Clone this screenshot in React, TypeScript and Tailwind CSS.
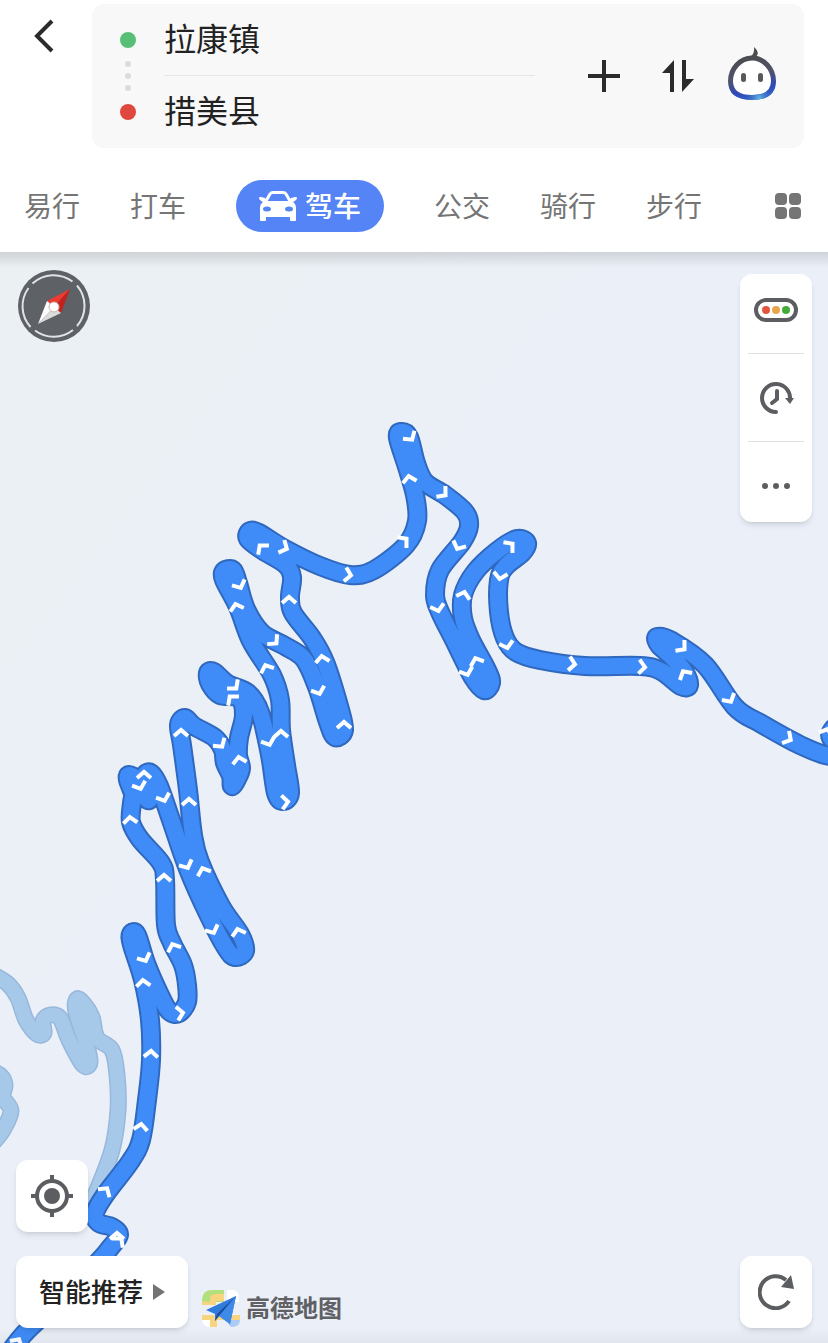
import { ReactNode } from 'react';

type Point = [number, number];

// Main driving route, listed from the south-west end to the east edge
const ROUTE: Point[] = [
  [-2, 1368], [24, 1334], [60, 1300], [98, 1262], [110, 1248], [119, 1235], [112, 1227], [99, 1223], [95, 1213], [105, 1195],
  [130, 1162], [141, 1140], [147, 1100], [151, 1060], [150, 1020], [143, 980], [132, 945], [131, 934], [137, 935],
  [146, 963], [159, 993], [169, 1011], [179, 1013], [187, 1002], [187, 985], [183, 965], [172, 943], [166, 925],
  [165, 880], [161, 863], [140, 839], [131, 822], [132, 803], [133, 794], [128, 780], [129, 775], [137, 780],
  [143, 794], [149, 800], [146, 785], [145, 775], [151, 773], [159, 786], [171, 820], [188, 869], [209, 916], [226, 948],
  [235, 957], [245, 951], [240, 934], [221, 906], [200, 862], [193, 835], [188, 790], [182, 745], [179, 725],
  [185, 718], [194, 726], [215, 738], [223, 750], [225, 763], [231, 776], [232, 786], [237, 779], [241, 768],
  [238, 755], [239, 738], [244, 715], [239, 698], [220, 695], [210, 684], [208, 673], [214, 672], [228, 684],
  [248, 693], [260, 712], [270, 755], [276, 793], [283, 801], [290, 793], [286, 765], [281, 730], [280, 700],
  [272, 675], [251, 641], [238, 607], [224, 580], [224, 571], [233, 570], [238, 583], [246, 609], [262, 633],
  [285, 646], [304, 659], [317, 687], [328, 722], [335, 737], [344, 730], [339, 706], [325, 662], [312, 638],
  [293, 613], [290, 597], [292, 577], [285, 564], [262, 550], [248, 539], [250, 531], [259, 533], [285, 549],
  [320, 566], [350, 575], [374, 570], [406, 545], [417, 521], [415, 495], [407, 467], [398, 438], [401, 432],
  [409, 437], [416, 463], [425, 482], [445, 495], [465, 512], [469, 526], [462, 542], [440, 570], [435, 595],
  [440, 612], [455, 642], [472, 676], [484, 690], [491, 683], [487, 670], [471, 640], [463, 618], [463, 595],
  [475, 572], [497, 551], [517, 539], [527, 543], [522, 553], [506, 566], [499, 580], [499, 612], [505, 638],
  [516, 652], [540, 660], [585, 666], [640, 666], [661, 671], [681, 686], [689, 685], [684, 671], [671, 656],
  [659, 645], [657, 637], [672, 641], [705, 665], [735, 707], [760, 723], [800, 745], [830, 756], [845, 750],
  [831, 738], [833, 729], [844, 722],
];

const SIDE_ROAD: Point[] = [
  [-8, 974], [8, 984], [18, 998], [26, 1020], [37, 1034], [44, 1033], [43, 1021], [50, 1015], [60, 1018], [69, 1040],
  [83, 1065], [90, 1062], [86, 1043], [76, 1012], [77, 999], [84, 1004], [92, 1017], [97, 1038], [112, 1050], [117, 1075],
  [118, 1110], [112, 1150], [95, 1195], [85, 1215],
];

const EDGE_ROAD: Point[] = [[-10, 1070], [1, 1076], [5, 1085], [3, 1097], [11, 1111], [3, 1130], [-8, 1144]];

// x, y and heading in degrees (0 points north)
const ARROWS: [number, number, number][] = [
  [411, 438, 145], [409, 478, -10], [444, 494, 130], [405, 540, 50], [349, 575, 100], [285, 548, 115],
  [261, 547, -40], [240, 586, 155], [236, 606, -15], [289, 599, 0], [275, 642, 135], [322, 658, -8],
  [319, 692, 160], [344, 724, 0], [266, 667, -22], [235, 687, 140], [231, 698, -40], [281, 733, 0],
  [269, 743, 160], [286, 802, 85], [181, 732, 0], [221, 745, 145], [239, 759, -10], [144, 774, 0],
  [140, 787, 160], [164, 799, 160], [189, 801, 0], [130, 819, -5], [164, 877, 0], [187, 866, 155],
  [203, 870, -20], [213, 931, 155], [238, 931, -15], [145, 959, 155], [143, 982, -5], [173, 946, -22],
  [181, 1013, 80], [151, 1053, 3], [141, 1126, 8], [106, 1190, 35], [117, 1235, 0], [120, 1240, 40], [458, 547, 205],
  [464, 594, 15], [438, 609, 165], [511, 545, 50], [500, 577, 190], [476, 660, -20], [467, 673, 160],
  [507, 646, 165], [573, 664, 98], [643, 667, 95], [683, 648, 130], [684, 673, -30], [730, 700, 150],
  [789, 739, 120], [827, 731, 20], [18, 1341, 30],
];

// Catmull-Rom through every point, written as cubic curves
const toPath = (pts: Point[]) => {
  let d = `M${pts[0][0]} ${pts[0][1]}`;
  for (let i = 0; i < pts.length - 1; i++) {
    const p0 = pts[i - 1] ?? pts[i];
    const p1 = pts[i];
    const p2 = pts[i + 1];
    const p3 = pts[i + 2] ?? p2;
    d += `C${p1[0] + (p2[0] - p0[0]) / 6} ${p1[1] + (p2[1] - p0[1]) / 6} ${p2[0] - (p3[0] - p1[0]) / 6} ${p2[1] - (p3[1] - p1[1]) / 6} ${p2[0]} ${p2[1]}`;
  }
  return d;
};

const RouteMap = () => {
  const route = toPath(ROUTE);
  const side = toPath(SIDE_ROAD);
  const edge = toPath(EDGE_ROAD);
  return (
    <svg
      className="absolute inset-0 h-full w-full"
      viewBox="0 252 828 1091"
      preserveAspectRatio="xMidYMid slice"
      fill="none"
      strokeLinecap="round"
      strokeLinejoin="round"
      aria-hidden="true"
    >
      <g stroke="#98b7dc" strokeWidth="17">
        <path d={side} />
        <path d={edge} />
      </g>
      <g stroke="#a7c9e9" strokeWidth="14">
        <path d={side} />
        <path d={edge} />
      </g>
      <path d={route} stroke="#2f68be" strokeWidth="20" />
      <path d={route} stroke="#3f8cf8" strokeWidth="16" />
      <g stroke="#fff" strokeWidth="4" strokeLinecap="butt" strokeLinejoin="miter">
        {ARROWS.map(([x, y, deg]) => (
          <path key={`${x}-${y}`} d="M-7 4L0 -2L7 4" transform={`translate(${x} ${y}) rotate(${deg})`} />
        ))}
      </g>
    </svg>
  );
};

const BackIcon = () => (
  <svg className="h-9 w-6" viewBox="0 0 24 36" fill="none" stroke="#2b2b2b" strokeWidth="4">
    <path d="M21 3L6 18L21 33" />
  </svg>
);

const PlusIcon = () => (
  <svg className="size-8" viewBox="0 0 32 32" stroke="#2b2b2b" strokeWidth="4">
    <path d="M16 0V32M0 16H32" />
  </svg>
);

const SwapIcon = () => (
  <svg className="size-8" viewBox="0 0 32 32" fill="#2b2b2b">
    <path d="M12 0V32H8V13H0ZM20 0H24V19H32L20 32Z" />
  </svg>
);

const AssistantIcon = () => (
  <svg className="h-14 w-12" viewBox="0 0 48 56" fill="none">
    <defs>
      <linearGradient id="face" x1="20" y1="10" x2="30" y2="54" gradientUnits="userSpaceOnUse">
        <stop offset="0" stopColor="#4b4c50" />
        <stop offset=".45" stopColor="#50536a" />
        <stop offset=".75" stopColor="#2f49b8" />
        <stop offset="1" stopColor="#3565c8" />
      </linearGradient>
      <radialGradient id="glow" cx="31" cy="52" r="14" gradientUnits="userSpaceOnUse">
        <stop offset="0" stopColor="#62b4e2" />
        <stop offset="1" stopColor="#3565c8" stopOpacity="0" />
      </radialGradient>
    </defs>
    <path d="M24 12C36 12 45.500 23 45.500 35C45.500 47 37 51.500 24 51.500S2.500 47 2.500 35C2.500 23 12 12 24 12Z" fill="#fff" stroke="url(#face)" strokeWidth="5" />
    <path d="M45.500 35C45.500 47 37 51.500 24 51.500S2.500 47 2.500 35" stroke="url(#glow)" strokeWidth="5" />
    <path d="M26 1Q33 7 27 12L22 11Q27 8 26 1Z" fill="#4b4c50" />
    <path d="M15.500 29.500V33.500M32.500 29.500V33.500" stroke="#58595c" strokeWidth="5" strokeLinecap="round" />
  </svg>
);

const CarIcon = () => (
  <svg className="h-8 w-[38px]" viewBox="0 0 38 32" fill="none">
    <path d="M7 11L11 4Q12 2.500 14 2.500H24Q26 2.500 27 4L31 11" stroke="#fff" strokeWidth="3" />
    <path
      d="M0 8Q0 6.500 2 7L6 8L8 11H30L32 8L36 7Q38 6.500 38 8Q38 10 34 12Q37 14 37 18V30Q37 31 36 31H32Q31 31 31 30V27H7V30Q7 31 6 31H2Q1 31 1 30V18Q1 14 4 12Q0 10 0 8Z"
      fill="#fff"
    />
    <ellipse cx="8" cy="19" rx="4" ry="2.500" fill="#5484f5" />
    <ellipse cx="30" cy="19" rx="4" ry="2.500" fill="#5484f5" />
  </svg>
);

const CompassIcon = () => (
  <svg className="size-[72px]" viewBox="0 0 72 72" fill="none">
    <circle cx="36" cy="36" r="36" fill="#5e6165" />
    <g stroke="#dfe3e6" strokeWidth="2">
      <path d="M14.500 13.500A31 31 0 0 1 54.500 11.500" />
      <path d="M59 15.500A31 31 0 0 1 59 56" />
      <path d="M55 60A31 31 0 0 1 17 60.500" />
      <path d="M12.500 57A31 31 0 0 1 10.500 18" />
    </g>
    <path d="M52 19L29 31L36 37Z" fill="#ef3a32" />
    <path d="M52 19L43 43L36 37Z" fill="#c3221c" />
    <path d="M20 54L29 31L36 37Z" fill="#fff" />
    <path d="M20 54L43 43L36 37Z" fill="#dcdcda" />
    <circle cx="36" cy="37" r="5" fill="#fff" stroke="#c9b3af" />
  </svg>
);

const TrafficIcon = () => (
  <svg className="h-6 w-11" viewBox="0 0 44 24">
    <rect x="2" y="2" width="40" height="20" rx="10" fill="#fff" stroke="#5c5d61" strokeWidth="4" />
    <circle cx="12" cy="12" r="4" fill="#e2543d" />
    <circle cx="22" cy="12" r="4" fill="#e9a648" />
    <circle cx="32" cy="12" r="4" fill="#45ac38" />
  </svg>
);

const DepartIcon = () => (
  <svg className="h-8 w-9" viewBox="0 0 36 32" fill="none" stroke="#5c5d61" strokeWidth="4" strokeLinecap="round">
    <path d="M18 30A14 14 0 1 1 32 17" />
    <path d="M19 9V17L14 21" />
    <path d="M27 16H36L32 22Z" fill="#5c5d61" stroke="none" />
  </svg>
);

const MoreIcon = () => (
  <svg className="h-2 w-7" viewBox="0 0 28 8" fill="#5c5d61">
    <circle cx="3" cy="4" r="3" />
    <circle cx="14" cy="4" r="3" />
    <circle cx="25" cy="4" r="3" />
  </svg>
);

const LocateIcon = () => (
  <svg className="size-[42px]" viewBox="0 0 42 42" fill="none" stroke="#5c5d61" strokeWidth="4">
    <circle cx="21" cy="21" r="15" />
    <circle cx="21" cy="21" r="8" fill="#5c5d61" stroke="none" />
    <path d="M21 0V6M21 36V42M0 21H6M36 21H42" />
  </svg>
);

const RefreshIcon = () => (
  <svg className="size-9" viewBox="0 0 36 36" fill="none">
    <path d="M31 27A16 16 0 1 1 28 6" stroke="#5c5d61" strokeWidth="4" />
    <path d="M33 1L36 15L23 13Z" fill="#5c5d61" />
  </svg>
);

const BrandIcon = () => (
  <svg className="size-[38px]" viewBox="0 0 38 38">
    <path d="M0 9Q1 0 10 0H22V12H0Z" fill="#b1e07c" />
    <path d="M25 0H32Q37 1 37 8V12H25ZM0 28H8V37Q0 37 0 28Z" fill="#fff" />
    <path d="M8 12V9Q8 4 13 4H22V11H14V15H0V11ZM0 25H38V30H15V37H8V30H0Z" fill="#f9d47e" />
    <path d="M26 30H38Q38 37 30 37Q26 36 26 30Z" fill="#adc9f5" />
    <path d="M34 6L4 20L13 24V31L17 26L28 34Z" fill="#317bdc" />
    <path d="M34 6L15 24L13 31L17 26Z" fill="#1a4b9e" />
    <path d="M34 6L17 26L28 34Z" fill="#3f8ae8" />
  </svg>
);

const MapButton = ({ label, children }: { label: string; children: ReactNode }) => (
  <button aria-label={label} className="flex size-[72px] items-center justify-center rounded-xl bg-white shadow-md">
    {children}
  </button>
);

const SearchHeader = () => (
  <div className="flex items-start pt-1 pr-6">
    <button aria-label="返回" className="flex h-16 w-[92px] shrink-0 items-center justify-center pr-1.5">
      <BackIcon />
    </button>
    <div className="flex min-w-0 flex-1 items-center rounded-xl bg-[#f8f8f8] pr-[15px] pl-6">
      <div className="mr-6 flex w-6 shrink-0 flex-col items-center">
        <span className="size-4 rounded-full bg-[#57c076]" />
        <div className="flex h-14 flex-col items-center justify-center gap-1.5">
          <span className="size-1.5 rounded-full bg-[#dcdcdc]" />
          <span className="size-1.5 rounded-full bg-[#dcdcdc]" />
          <span className="size-1.5 rounded-full bg-[#dcdcdc]" />
        </div>
        <span className="size-4 rounded-full bg-[#df483f]" />
      </div>
      <div className="mr-8 min-w-0 flex-1">
        <input
          aria-label="起点"
          defaultValue="拉康镇"
          className="block h-[72px] w-full border-b border-[#e6e6e6] bg-transparent pb-1.5 text-[32px] text-[#222] outline-none"
        />
        <input
          aria-label="终点"
          defaultValue="措美县"
          className="block h-[72px] w-full bg-transparent pb-1.5 text-[32px] text-[#222] outline-none"
        />
      </div>
      <button aria-label="添加途经点" className="flex h-[74px] w-[74px] items-center justify-center">
        <PlusIcon />
      </button>
      <button aria-label="交换起终点" className="flex h-[74px] w-[74px] items-center justify-center">
        <SwapIcon />
      </button>
      <button aria-label="语音助手" className="flex h-[74px] w-[74px] items-center justify-center pb-1">
        <AssistantIcon />
      </button>
    </div>
  </div>
);

const Tab = ({ children }: { children: ReactNode }) => (
  <button className="shrink-0 pb-0.5 text-[28px] leading-10 text-[#757575]">{children}</button>
);

const TravelTabs = () => (
  <nav className="flex items-center gap-[50px] px-6 pt-8 pb-5">
    <Tab>易行</Tab>
    <Tab>打车</Tab>
    <button className="flex h-[52px] w-[148px] shrink-0 items-center justify-center gap-2 rounded-full bg-[#5484f5] text-[28px] leading-10 font-medium text-white">
      <CarIcon />
      <span className="pb-0.5">驾车</span>
    </button>
    <Tab>公交</Tab>
    <Tab>骑行</Tab>
    <Tab>步行</Tab>
    <button aria-label="更多出行方式" className="ml-auto grid shrink-0 grid-cols-2 gap-0.5 pr-[3px]">
      <span className="size-3 rounded-sm bg-[#757575]" />
      <span className="size-3 rounded-sm bg-[#757575]" />
      <span className="size-3 rounded-sm bg-[#757575]" />
      <span className="size-3 rounded-sm bg-[#757575]" />
    </button>
  </nav>
);

const App = () => {
  return (
    <div className="flex min-h-screen flex-col bg-white font-['Noto_Sans_CJK_SC',sans-serif]">
      <header>
        <SearchHeader />
        <TravelTabs />
      </header>

      <main className="relative flex flex-1 flex-col justify-between overflow-hidden bg-linear-to-br from-[#ebf0f3] to-[#ebf0f8] to-40% px-4 pt-[18px] pb-[15px]">
        <RouteMap />
        {/* Edge shading under the header and above the bottom bar */}
        <div className="absolute inset-x-0 top-0 h-4 bg-linear-to-b from-black/12 to-transparent" />
        <div className="absolute inset-x-0 bottom-0 h-4 bg-linear-to-t from-black/4 to-transparent" />

        <div className="relative flex items-start justify-between">
          <button aria-label="指南针" className="ml-0.5">
            <CompassIcon />
          </button>
          <div className="mt-1 flex w-[72px] flex-col rounded-xl bg-white px-2 shadow-md">
            <button aria-label="路况" className="flex h-20 items-center justify-center border-b border-[#e2e2e2] pb-2">
              <TrafficIcon />
            </button>
            <button aria-label="出发时间" className="flex h-[88px] items-center justify-center border-b border-[#e2e2e2]">
              <DepartIcon />
            </button>
            <button aria-label="更多" className="flex h-20 items-center justify-center pt-2">
              <MoreIcon />
            </button>
          </div>
        </div>

        <div className="relative flex flex-col gap-6">
          <MapButton label="定位">
            <LocateIcon />
          </MapButton>
          <div className="flex items-end">
            <button className="flex h-[72px] w-[172px] items-center justify-center gap-2.5 rounded-xl bg-white text-[26px] font-medium text-[#222] shadow-md">
              <span className="pb-1">智能推荐</span>
              <svg className="h-4 w-3" viewBox="0 0 12 16" fill="#737373">
                <path d="M0 0L12 8L0 16Z" />
              </svg>
            </button>
            <div className="ml-3.5 flex items-center gap-1.5">
              <BrandIcon />
              <span className="pb-1 text-2xl font-bold text-[#5f6165]">高德地图</span>
            </div>
            <div className="ml-auto">
              <MapButton label="刷新">
                <RefreshIcon />
              </MapButton>
            </div>
          </div>
        </div>
      </main>
    </div>
  );
};

export default App;
